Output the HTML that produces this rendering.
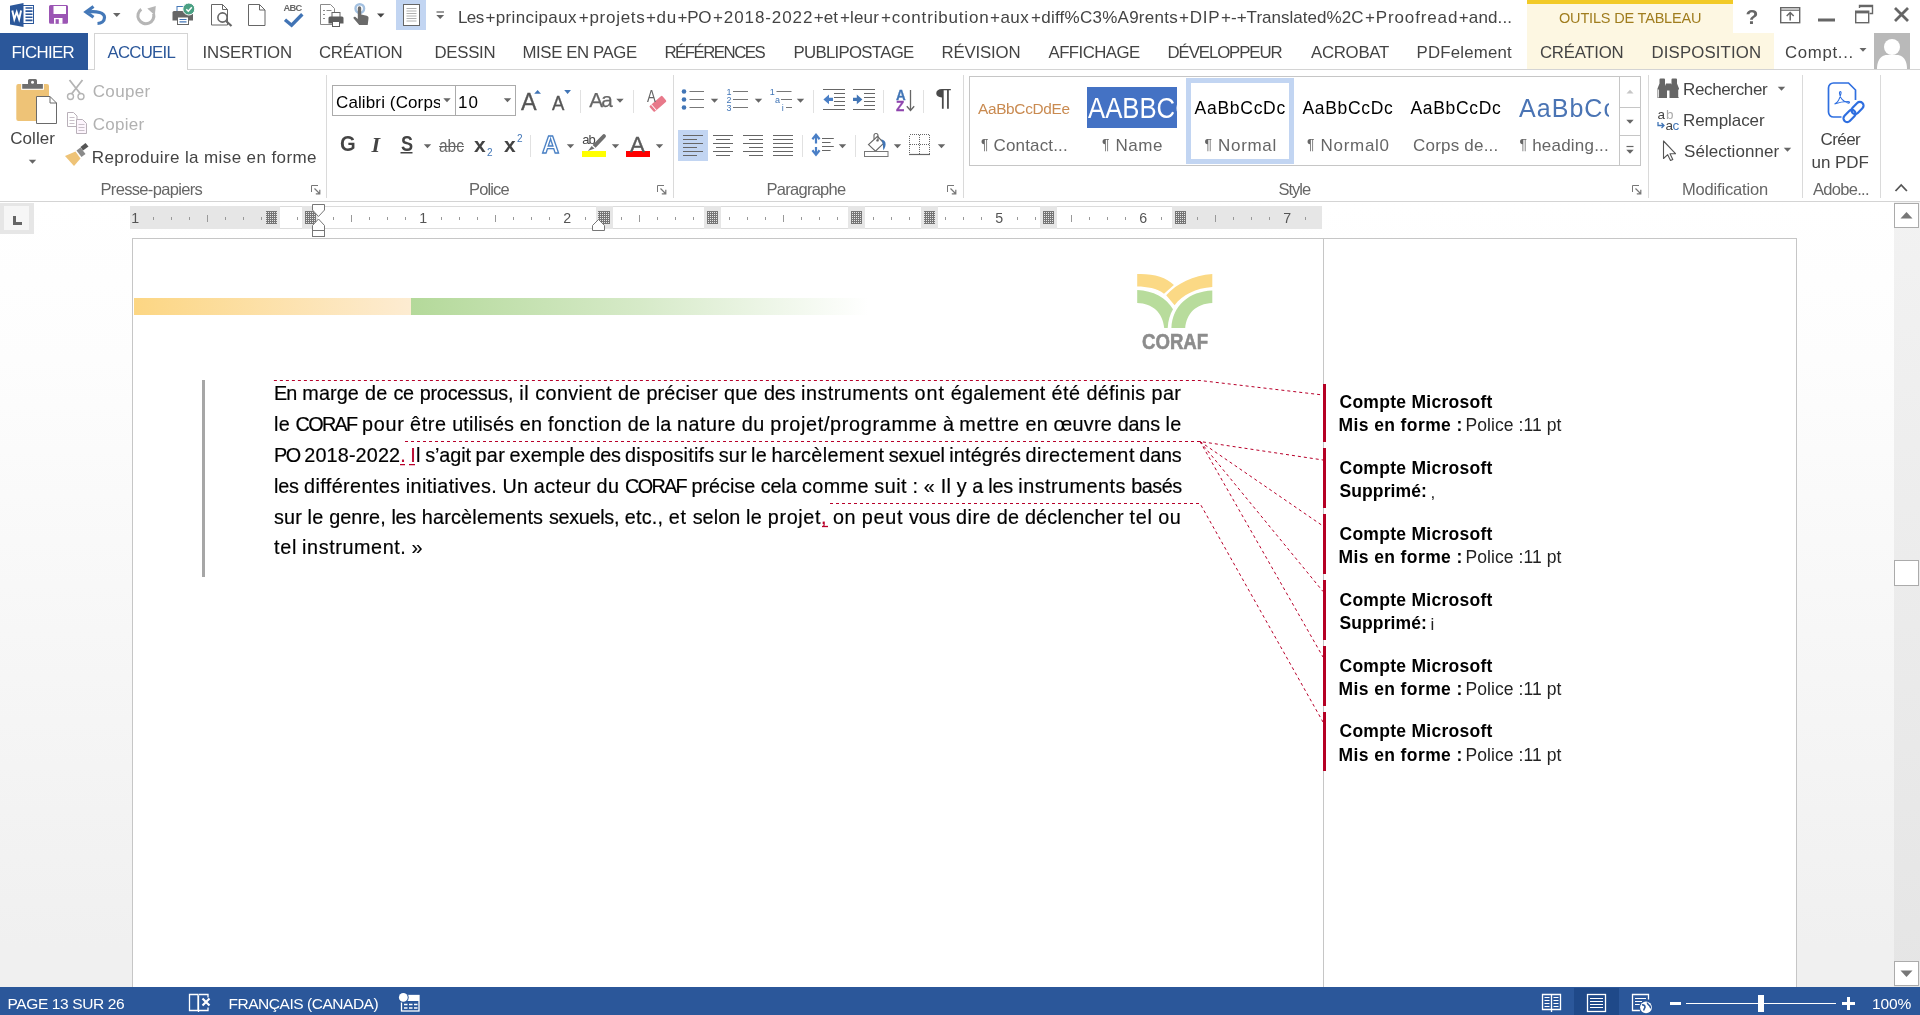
<!DOCTYPE html>
<html lang="fr"><head><meta charset="utf-8"><title>Word</title>
<style>
html,body{margin:0;padding:0}
body{width:1920px;height:1015px;overflow:hidden;background:#fff;position:relative;font-family:"Liberation Sans",sans-serif;color:#444}
.t{position:absolute;white-space:pre;transform-origin:0 0;display:block}
.a{position:absolute;box-sizing:border-box}
svg.ov{position:absolute;left:0;top:0;overflow:visible}
.sep{position:absolute;width:1px;background:#e1e1e1}
.gsep{position:absolute;width:1px;background:#dadada;top:75px;height:123px}
.r{color:#b8002a}
#txt{position:absolute;left:0;top:0;width:1920px;height:1015px;will-change:transform}
.doc{-webkit-text-stroke-width:0.2px}

</style></head>
<body>
<!-- ===== title bar ===== -->
<div class="a" id="titlebar" style="left:0;top:0;width:1920px;height:33px;background:#fff"></div>
<div class="a" style="left:396px;top:0;width:30px;height:30px;background:#c2d5f2"></div>
<div class="a" id="ctxhead" style="left:1527px;top:0;width:206px;height:33px;background:#fdf7e2;border-top:4px solid #f2ca27"></div>
<div class="a" id="ctxtabs" style="left:1527px;top:33px;width:247px;height:36px;background:#fdf7e2"></div>
<!-- ===== tab row ===== -->
<div class="a" style="left:0;top:69px;width:1920px;height:1px;background:#d4d4d4"></div>
<div class="a" id="fichier" style="left:0;top:33px;width:88px;height:37px;background:#2b579a"></div>
<div class="a" id="tabsel" style="left:94px;top:33px;width:94px;height:37px;background:#fff;border:1px solid #d4d4d4;border-bottom:none"></div>
<div class="a" id="avatar" style="left:1874px;top:33px;width:36px;height:36px;background:#b9b9b9;overflow:hidden">
 <svg width="36" height="36" viewBox="0 0 36 36"><circle cx="18" cy="14" r="8" fill="#fff"/><path d="M3 36 C3 24 10 22 13 22 L23 22 C26 22 33 24 33 36Z" fill="#fff"/></svg>
</div>
<svg class="ov" width="1920" height="72" viewBox="0 0 1920 72">
 <!-- word icon -->
 <path d="M10 5.800 L23.500 3 V27 L10 24.400Z" fill="#2b579a"/>
 <rect x="23" y="5.500" width="10.500" height="18" fill="#fff" stroke="#2b579a" stroke-width="1"/>
 <path d="M25.500 8h7M25.500 11.100h7M25.500 14.200h7M25.500 17.300h7M25.500 20.400h7" stroke="#2b579a" stroke-width="1.600"/>
 <path d="M12.300 10.500 L14.300 19.300 L16.700 12 L19.100 19.300 L21.100 10.500" fill="none" stroke="#fff" stroke-width="1.900"/>
 <!-- save -->
 <path d="M50.500 5h16a1.500 1.500 0 0 1 1.500 1.500v15.800a1.500 1.500 0 0 1-1.500 1.500h-16a1.500 1.500 0 0 1-1.500-1.500v-15.800a1.500 1.500 0 0 1 1.500-1.500z" fill="#9b55b4"/>
 <rect x="53.500" y="6" width="12.500" height="8" fill="#fff"/>
 <rect x="54" y="18" width="8.500" height="5.800" fill="#fff"/>
 <rect x="55.600" y="19.200" width="3.200" height="4.600" fill="#9b55b4"/>
 <!-- undo -->
 <path d="M93.500 6.500 L86 12 L93.500 17.200 M87.500 12 C97 11 104.500 12.500 104.500 17.500 C104.500 21.500 101 23.300 97.500 23.500" fill="none" stroke="#4478b8" stroke-width="3.200" stroke-linejoin="miter"/>
 <path d="M113 13h7.500l-3.750 4z" fill="#666"/>
 <!-- redo (disabled) -->
 <path d="M141.300 9.200 A8 8 0 1 0 153.600 13.600" fill="none" stroke="#b6b6b6" stroke-width="3"/>
 <path d="M147.300 8.600 L155.800 6 L154.800 15.200z" fill="#b6b6b6"/>
 <!-- printer with check -->
 <rect x="177" y="6.500" width="9" height="6" fill="#fff" stroke="#4478b8" stroke-width="1"/>
 <path d="M174 11h17.500a1.500 1.500 0 0 1 1.500 1.500v8h-20.500v-8a1.500 1.500 0 0 1 1.500-1.500z" fill="#666"/>
 <rect x="177.500" y="17" width="11" height="7.500" fill="#fff" stroke="#666" stroke-width="1"/>
 <path d="M179.500 19.500h7M179.500 21.800h7" stroke="#4175b6" stroke-width="1.200"/>
 <circle cx="188.800" cy="9" r="6" fill="#4aa083" stroke="#fff" stroke-width="1"/>
 <path d="M186.3 9.2l2 2 3.5-4" fill="none" stroke="#fff" stroke-width="1.5"/>
 <!-- preview -->
 <path d="M211.5 4.5h11l5 5v15.5h-16z" fill="#fff" stroke="#666" stroke-width="1"/>
 <path d="M222.5 4.5v5h5" fill="none" stroke="#666" stroke-width="1"/>
 <circle cx="222.5" cy="17.5" r="4.6" fill="#fff" stroke="#666" stroke-width="1.6"/>
 <path d="M226 21l5.5 5" stroke="#666" stroke-width="2.2"/>
 <!-- new page -->
 <path d="M248.5 4.5h11l5.5 5.5v15.5h-16.5z" fill="#fff" stroke="#666" stroke-width="1"/>
 <path d="M259.5 4.5v5.5h5.5" fill="none" stroke="#666" stroke-width="1"/>
 <!-- ABC check -->
 <path d="M285 19.800L291.600 25.300L302.300 14.300" fill="none" stroke="#4174b5" stroke-width="3.400"/>
 <!-- quick print -->
 <path d="M320.5 4.5h10l4 4v16h-14z" fill="#fff" stroke="#8a8a8a" stroke-width="1"/>
 <path d="M323 10.5h2M323 14.5h2M323 18.5h2M326.5 10.5h5" stroke="#8a8a8a" stroke-width="1"/>
 <rect x="332" y="12.5" width="8" height="5" fill="#fff" stroke="#666" stroke-width="1"/>
 <path d="M330 16.5h12a1.5 1.5 0 0 1 1.5 1.5v5.5h-15v-5.5a1.5 1.5 0 0 1 1.5-1.5z" fill="#5e5e5e"/>
 <rect x="332.5" y="21.5" width="7" height="5" fill="#fff" stroke="#5e5e5e" stroke-width="1"/>
 <!-- touch -->
 <circle cx="359.800" cy="8.500" r="4.300" fill="none" stroke="#a3c0e0" stroke-width="2.400"/>
 <path d="M357.8 8 a1.7 1.7 0 0 1 3.4 0 v6.5 l5.5 1.2 c1.5 .4 2 1.3 1.8 2.8 l-.8 6.5 h-8.5 l-5.5-6.5 c-.8-1.2 .6-2.4 1.8-1.5 l2.3 1.9z" fill="#6a6a6a"/>
 <path d="M377 13.5h7.5l-3.75 4z" fill="#444"/>
 <!-- page (selected) -->
 <rect x="403.500" y="4.500" width="16" height="21" fill="#fff" stroke="#666" stroke-width="1"/>
 <path d="M406.500 8.500h10M406.500 11h10M406.500 13.500h10M406.500 16h10M406.500 18.500h10M406.500 21h10" stroke="#b0b0b0" stroke-width="1"/>
 <!-- customize -->
 <path d="M436.5 12h7.5" stroke="#666" stroke-width="1.3"/>
 <path d="M436.3 15h7.8l-3.9 4z" fill="#666"/>
 <!-- window controls -->
 <rect x="1780.700" y="7.700" width="19" height="15" fill="none" stroke="#666" stroke-width="1.400"/>
 <path d="M1780.700 10.200h19" stroke="#666" stroke-width="1.200"/>
 <path d="M1790.200 20.500v-7.500M1786.700 16l3.500-3.500 3.500 3.500" fill="none" stroke="#666" stroke-width="1.500"/>
 <rect x="1818" y="18.5" width="17" height="3" fill="#666"/>
 <path d="M1859.5 8v-2.5h13v8h-3" fill="none" stroke="#666" stroke-width="1.4"/>
 <path d="M1859.5 6.2h13" stroke="#666" stroke-width="2"/>
 <rect x="1855.7" y="11.2" width="13" height="11.5" fill="#fff" stroke="#666" stroke-width="1.4"/>
 <path d="M1855.7 12.2h13" stroke="#666" stroke-width="2.4"/>
 <path d="M1895 8l13 13M1908 8l-13 13" stroke="#666" stroke-width="2.8"/>
 <!-- account arrow -->
 <path d="M1859.5 48h7l-3.5 3.8z" fill="#666"/>
</svg>
<!-- ===== ribbon ===== -->
<div class="a" id="ribbon" style="left:0;top:70px;width:1920px;height:131px;background:#fff"></div>
<div class="a" style="left:0;top:201px;width:1920px;height:1px;background:#d4d4d4"></div>
<div class="gsep" style="left:326px"></div>
<div class="gsep" style="left:673px"></div>
<div class="gsep" style="left:963px"></div>
<div class="gsep" style="left:1648px"></div>
<div class="gsep" style="left:1802px"></div>
<div class="gsep" style="left:1880px"></div>
<!-- font boxes -->
<div class="a" style="left:332px;top:85px;width:124px;height:31px;border:1px solid #ababab;background:#fff"></div>
<div class="a" style="left:455px;top:85px;width:61px;height:31px;border:1px solid #ababab;background:#fff"></div>
<!-- small separators -->
<div class="sep" style="left:580px;top:90px;height:23px"></div>
<div class="sep" style="left:633px;top:90px;height:23px"></div>
<div class="sep" style="left:530px;top:135px;height:22px"></div>
<div class="sep" style="left:813px;top:90px;height:23px"></div>
<div class="sep" style="left:883px;top:90px;height:23px"></div>
<div class="sep" style="left:923px;top:90px;height:23px"></div>
<div class="sep" style="left:802px;top:135px;height:22px"></div>
<div class="sep" style="left:855px;top:135px;height:22px"></div>
<!-- selected align-left -->
<div class="a" style="left:678px;top:130px;width:30px;height:31px;background:#c2d5f2"></div>
<!-- highlight + font colour bars -->
<div class="a" style="left:582px;top:151px;width:24px;height:6px;background:#ffff00"></div>
<div class="a" style="left:626px;top:151px;width:24px;height:6px;background:#ff0000"></div>
<!-- style gallery -->
<div class="a" id="gallery" style="left:969px;top:76px;width:672px;height:90px;border:1px solid #c6c6c6;background:#fff"></div>
<div class="a" style="left:1619px;top:76px;width:1px;height:90px;background:#c6c6c6"></div>
<div class="a" style="left:1619px;top:107px;width:22px;height:1px;background:#c6c6c6"></div>
<div class="a" style="left:1619px;top:135px;width:22px;height:1px;background:#c6c6c6"></div>
<div class="a" style="left:1087px;top:87px;width:90px;height:41px;background:#4472c4"></div>
<div class="a" style="left:1186px;top:78px;width:108px;height:86px;border:5px solid #c2d5f2;background:#fff"></div>
<svg class="ov" width="1920" height="202" viewBox="0 0 1920 202">
 <defs>
  <path id="dd" d="M-0.200 0.200h7.400l-3.700 4.100z" fill="#666"/>
  <g id="launch"><path d="M0.5 7v-6.5h6.5" fill="none" stroke="#777" stroke-width="1"/><path d="M3.5 3.5l5 5M8.8 4.8v4h-4" fill="none" stroke="#777" stroke-width="1.2"/></g>
 </defs>
 <!-- paste -->
 <path d="M18.300 84h28.700a2 2 0 0 1 2 2v33a2 2 0 0 1-2 2h-28.700a2 2 0 0 1-2-2v-33a2 2 0 0 1 2-2z" fill="#eec377"/>
 <rect x="21.200" y="83" width="22.700" height="6.800" fill="#fff"/>
 <path d="M22.200 84h5.800v-3.500a1.500 1.500 0 0 1 1.500-1.500h6a1.500 1.500 0 0 1 1.500 1.500v3.500h5.900v4.800h-20.700z" fill="#6e6e6e"/>
 <circle cx="32.500" cy="82.300" r="1.500" fill="#fff"/>
 <path d="M36.5 96.5h13.5l6.5 6.5v20.5h-20z" fill="#fff" stroke="#6a6a6a" stroke-width="1"/>
 <path d="M50 96.5v6.5h6.5" fill="none" stroke="#6a6a6a" stroke-width="1"/>
 <use href="#dd" x="29" y="159.5"/>
 <!-- scissors (disabled) -->
 <path d="M69.5 80l11 14M82.5 80l-11 14" stroke="#b4b4b4" stroke-width="1.8"/>
 <circle cx="70.5" cy="96.5" r="3" fill="none" stroke="#b4b4b4" stroke-width="1.4"/>
 <circle cx="81" cy="96.5" r="3" fill="none" stroke="#b4b4b4" stroke-width="1.4"/>
 <!-- copy (disabled) -->
 <path d="M67.5 112.5h6l3.5 3.5v10.5h-9.5z" fill="#fff" stroke="#b9b0b9" stroke-width="1"/>
 <path d="M69.5 117.5h5M69.5 120.5h5M69.5 123.5h5" stroke="#c9c0c9" stroke-width="1"/>
 <path d="M76.5 119.5h6l4 4v10h-10z" fill="#fdf5fd" stroke="#b9b0b9" stroke-width="1"/>
 <path d="M78.5 124.5h6M78.5 127.5h6M78.5 130.5h6" stroke="#c9c0c9" stroke-width="1"/>
 <!-- format painter -->
 <path d="M65 156l10.5-4.5 5 7-6.5 7.5z" fill="#eec377"/>
 <path d="M76.5 150.5l4-3 5 6.5-4 3z" fill="#8a8a8a"/>
 <path d="M80.500 147l5-4 3 3.500-5.500 4z" fill="#555"/>
 <!-- font boxes arrows -->
 <use href="#dd" x="443.500" y="98"/>
 <use href="#dd" x="504" y="98"/>
 <path d="M534.200 93.800l3.400-3.900 3.400 3.900z" fill="#4175b6"/>
 <path d="M564.200 90h6.800l-3.400 3.900z" fill="#4175b6"/>
 <use href="#dd" x="616.500" y="98.500"/>
 <!-- clear formatting eraser -->
 <g transform="translate(657.900 103.800) rotate(-41)"><rect x="-8.400" y="-3.800" width="16.800" height="7.600" rx="1.200" fill="#e8798a"/><rect x="-6" y="-3.800" width="1" height="7.600" fill="#fff"/></g>
 <!-- row2 arrows -->
 <use href="#dd" x="424" y="144"/>
 <use href="#dd" x="567" y="144"/>
 <use href="#dd" x="612" y="144"/>
 <use href="#dd" x="656" y="144"/>
 <!-- highlighter pen -->
 <path d="M602.600 134.800a1.900 1.900 0 0 1 2.800 2.600l-9.800 10.400-3-2.800z" fill="#6e6e6e"/><path d="M591.700 146l2.800 2.600-6.600 2.500z" fill="#6e6e6e"/>
 <!-- S underline -->
 <rect x="400.500" y="152" width="12" height="1.500" fill="#444"/>
 <!-- bullets -->
 <g fill="#4175b6"><circle cx="684" cy="91.500" r="2.300"/><circle cx="684" cy="99.500" r="2.300"/><circle cx="684" cy="107.500" r="2.300"/></g>
 <path d="M689.500 91.500h14.500M689.500 99.500h14.500M689.500 107.500h14.500" stroke="#777" stroke-width="1.200"/>
 <use href="#dd" x="711" y="98.500"/>
 <!-- numbering -->
 <path d="M733 91.500h15M733 99.500h15M733 107.500h15" stroke="#777" stroke-width="1.200"/>
 <use href="#dd" x="755" y="98.500"/>
 <!-- multilevel -->
 <path d="M776.500 91.500h15M781 99.500h11M786 107.500h6" stroke="#777" stroke-width="1.200"/>
 <use href="#dd" x="797" y="98.500"/>
 <!-- decrease indent -->
 <path d="M823 89.500h22M834 93.500h11M834 97.500h11M834 101.500h11M834 105.500h11M823 109.500h22" stroke="#666" stroke-width="1"/>
 <path d="M823.400 99.400L829 94.600V97.800H833V101H829V104.200Z" fill="#4a7fc6"/>
 <!-- increase indent -->
 <path d="M853 89.500h22M864 93.500h11M864 97.500h11M864 101.500h11M864 105.500h11M853 109.500h22" stroke="#666" stroke-width="1"/>
 <path d="M862.400 99.400L856.800 94.600V97.800H853V101H856.800V104.200Z" fill="#4175b6"/>
 <!-- sort arrow -->
 <path d="M910.500 90v20M906.800 106.300l3.700 4.200 3.700-4.200" fill="none" stroke="#666" stroke-width="1.300"/>
 <!-- align icons -->
 <path d="M683 135.500h20M683 139.500h14M683 143.500h20M683 147.500h14M683 151.500h20M683 155.500h14" stroke="#666" stroke-width="1.100"/>
 <path d="M713 135.500h20M716 139.500h14M713 143.500h20M716 147.500h14M713 151.500h20M716 155.500h14" stroke="#666" stroke-width="1.100"/>
 <path d="M743 135.500h20M749 139.500h14M743 143.500h20M749 147.500h14M743 151.500h20M749 155.500h14" stroke="#666" stroke-width="1.100"/>
 <path d="M773 135.500h20M773 139.500h20M773 143.500h20M773 147.500h20M773 151.500h20M773 155.500h20" stroke="#666" stroke-width="1.100"/>
 <!-- line spacing -->
 <path d="M816 135.500v8M816 147v7" fill="none" stroke="#4a7fc6" stroke-width="2.200"/>
 <path d="M812.400 139.300l3.600-4.600 3.600 4.600M812.400 150.200l3.600 4.600 3.600-4.600" fill="none" stroke="#4a7fc6" stroke-width="2.200"/>
 <path d="M822 138.500h11.800M822 142.500h8.600M822 146.500h11.800M822 150.500h8.600" stroke="#666" stroke-width="1"/>
 <use href="#dd" x="839" y="144"/>
 <!-- shading bucket -->
 <path d="M868.500 144.600l9-8.300 6.300 6.800-8.300 8z" fill="#fff" stroke="#666" stroke-width="1.200"/>
 <path d="M874 139.500v-4a2 2 0 0 1 4 0v4.500" fill="none" stroke="#666" stroke-width="1.100"/>
 <circle cx="877.500" cy="140.400" r="1.200" fill="#666"/>
 <path d="M881.200 139.200c2.800 .6 4.600 2.600 4.400 5.200-.2 2.400-1 4-2.200 5.800-.6-3.600-.4-5.600-.9-7.400z" fill="#4175b6"/>
 <rect x="864.500" y="151.500" width="23.500" height="5" fill="#fff" stroke="#777" stroke-width="1"/>
 <use href="#dd" x="894" y="144"/>
 <!-- borders -->
 <rect x="909.500" y="134.500" width="20" height="20" fill="none" stroke="#666" stroke-width="1" stroke-dasharray="1 1" shape-rendering="crispEdges"/>
 <path d="M919.500 134.500v20M909.500 144.500h20" stroke="#666" stroke-width="1" stroke-dasharray="1 1" shape-rendering="crispEdges"/>
 <path d="M909 154.500h21" stroke="#666" stroke-width="1.200"/>
 <use href="#dd" x="938" y="144"/>
 <!-- launchers -->
 <use href="#launch" x="311" y="185"/>
 <use href="#launch" x="657" y="185"/>
 <use href="#launch" x="947" y="185"/>
 <use href="#launch" x="1632" y="185"/>
 <!-- gallery scroll arrows -->
 <path d="M1626.500 93.500h7l-3.500-3.800z" fill="#c6c6c6"/>
 <use href="#dd" x="1626.500" y="119.500"/>
 <path d="M1626.500 146.500h7" stroke="#666" stroke-width="1.200"/>
 <use href="#dd" x="1626.500" y="149.500"/>
 <!-- binoculars -->
 <path d="M1657.500 98v-9.500l2-5v-4a1 1 0 0 1 1-1h3.500a1 1 0 0 1 1 1v4l2 5v9.500zM1669.500 98v-9.500l2-5v-4a1 1 0 0 1 1-1h3.500a1 1 0 0 1 1 1v4l2 5v9.500z" fill="#666"/>
 <rect x="1666" y="83.500" width="5" height="7" fill="#666"/>
 <path d="M1658.500 97.500v-8M1678.500 97.500v-8" stroke="#ddd" stroke-width="1"/>
 <use href="#dd" x="1778" y="86.500"/>
 <!-- replace arrow -->
 <path d="M1658 122v3.500h5.500M1661.500 123l2.500 2.500-2.500 2.500" fill="none" stroke="#4175b6" stroke-width="1.300"/>
 <!-- select cursor -->
 <path d="M1663.500 141v17.500l4.200-3.800 2.800 5.800 2.300-1.100-2.800-5.700h5.500z" fill="#fff" stroke="#555" stroke-width="1.100" stroke-linejoin="round"/>
 <use href="#dd" x="1784" y="147.500"/>
 <!-- create PDF -->
 <path d="M1828.500 88a5 5 0 0 1 5-5h15l7 7v10" fill="none" stroke="#2f6fe0" stroke-width="1.700"/>
 <path d="M1828.500 88v24a5 5 0 0 0 5 5h8" fill="none" stroke="#2f6fe0" stroke-width="1.700"/>
 <path d="M1834.500 104c3-1 5.500-6 6.500-10.500 .5-2.500-1.800-2.500-1.500 0 .6 4.500 4 8 8.500 9.500 2 .5 2-1.500 0-1.500-4.500 0-10 1.200-13.500 2.500z" fill="none" stroke="#2f6fe0" stroke-width="1.100"/>
 <g fill="none" stroke="#2f6fe0" stroke-width="2.200"><rect x="-7" y="-3.700" width="14" height="7.400" rx="3.700" transform="translate(1849.500 116) rotate(-45)"/><rect x="-7" y="-3.700" width="14" height="7.400" rx="3.700" transform="translate(1857.500 108) rotate(-45)"/></g>
 <!-- collapse ribbon -->
 <path d="M1895.500 191l5.700-6 5.700 6" fill="none" stroke="#555" stroke-width="1.800"/>
</svg>
<!-- ===== document area ===== -->
<div class="a" id="docarea" style="left:0;top:202px;width:1920px;height:785px;background:linear-gradient(#ffffff,#fdfdfd 20%,#f0f0f0 95%)"></div>
<!-- tab selector -->
<div class="a" style="left:0;top:203px;width:34px;height:31px;background:#e6e6e6"></div>
<div class="a" style="left:4px;top:206px;width:25px;height:24px;background:#f6f6f6"></div>
<div class="a" style="left:13px;top:216px;width:3px;height:9px;background:#666"></div>
<div class="a" style="left:13px;top:222px;width:9px;height:3px;background:#666"></div>
<!-- ruler -->
<div class="a" id="ruler" style="left:130px;top:206px;width:1192px;height:23px;background:#fff;border-top:1px solid #dcdcdc;border-bottom:1px solid #dcdcdc"></div>
<div class="a" style="left:130px;top:206px;width:150px;height:23px;background:#e6e6e6"></div>
<div class="a" style="left:302px;top:206px;width:16px;height:23px;background:#e6e6e6"></div>
<div class="a" style="left:596px;top:206px;width:17px;height:23px;background:#e6e6e6"></div>
<div class="a" style="left:704px;top:206px;width:17px;height:23px;background:#e6e6e6"></div>
<div class="a" style="left:848px;top:206px;width:17px;height:23px;background:#e6e6e6"></div>
<div class="a" style="left:921px;top:206px;width:17px;height:23px;background:#e6e6e6"></div>
<div class="a" style="left:1040px;top:206px;width:17px;height:23px;background:#e6e6e6"></div>
<div class="a" style="left:1172px;top:206px;width:150px;height:23px;background:#e6e6e6"></div>
<!-- page -->
<div class="a" id="page" style="left:132px;top:238px;width:1665px;height:750px;background:#fff;border:1px solid #c6c6c6;border-bottom:none"></div>
<div class="a" style="left:1323px;top:239px;width:1px;height:748px;background:#c6c6c6"></div>
<!-- header gradient bars -->
<div class="a" style="left:134px;top:298px;width:277px;height:17px;background:linear-gradient(90deg,#fcd683,#fdecd2)"></div>
<div class="a" style="left:411px;top:298px;width:457px;height:17px;background:linear-gradient(90deg,#b4d99a,#d6eac8 50%,#ffffff)"></div>
<!-- change bar -->
<div class="a" style="left:202px;top:380px;width:3px;height:197px;background:#a6a6a6"></div>
<!-- balloon bars -->
<div class="a" style="left:1323px;top:384px;width:3px;height:58px;background:#b50024"></div>
<div class="a" style="left:1323px;top:448px;width:3px;height:60px;background:#b50024"></div>
<div class="a" style="left:1323px;top:514px;width:3px;height:60px;background:#b50024"></div>
<div class="a" style="left:1323px;top:580px;width:3px;height:60px;background:#b50024"></div>
<div class="a" style="left:1323px;top:646px;width:3px;height:60px;background:#b50024"></div>
<div class="a" style="left:1323px;top:712px;width:3px;height:59px;background:#b50024"></div>
<!-- scrollbar -->
<div class="a" style="left:1894px;top:202px;width:26px;height:785px;background:linear-gradient(#f2f2f2,#e5e5e5)"></div>
<div class="a" style="left:1894px;top:203px;width:25px;height:25px;background:#fff;border:1px solid #ababab"></div>
<div class="a" style="left:1894px;top:560px;width:25px;height:26px;background:#fff;border:1px solid #ababab"></div>
<div class="a" style="left:1894px;top:961px;width:25px;height:25px;background:#fff;border:1px solid #ababab"></div>
<svg class="ov" width="1920" height="1015" viewBox="0 0 1920 1015">
 <defs>
  <pattern id="hatch" width="2" height="2" patternUnits="userSpaceOnUse"><rect width="2" height="2" fill="#757575"/><rect x="0" y="0" width="1" height="1" fill="#e6e6e6"/></pattern>
 </defs>
 <!-- scroll arrows -->
 <path d="M1900.500 218.500h12l-6-6.500z" fill="#777"/>
 <path d="M1900.500 970.500h12l-6 6.500z" fill="#777"/>
 <!-- ruler ticks -->
 <g stroke="#999" stroke-width="1">
  <path d="M153.500 217v3M171.500 217v3M189.500 217v3M207.500 215v7M225.500 217v3M243.500 217v3M261.500 217v3"/>
  <path d="M297.500 217v3M333.500 217v3M351.500 215v7M369.500 217v3M387.500 217v3M405.500 217v3"/>
  <path d="M441.500 217v3M459.500 217v3M477.500 217v3M495.500 215v7M513.500 217v3M531.500 217v3M549.500 217v3M585.500 217v3"/>
  <path d="M621.500 217v3M639.500 215v7M657.500 217v3M675.500 217v3M693.500 217v3"/>
  <path d="M729.500 217v3M747.500 217v3M765.500 217v3M783.500 215v7M801.500 217v3M819.500 217v3M837.500 217v3"/>
  <path d="M873.500 217v3M891.500 217v3M909.500 217v3"/>
  <path d="M945.500 217v3M963.500 217v3M981.500 217v3M1017.500 217v3M1035.500 217v3"/>
  <path d="M1071.500 215v7M1089.500 217v3M1107.500 217v3M1125.500 217v3M1161.500 217v3"/>
  <path d="M1197.500 217v3M1215.500 215v7M1233.500 217v3M1251.500 217v3M1269.500 217v3M1305.500 217v3"/>
 </g>
 <!-- hatch markers -->
 <g fill="url(#hatch)">
  <rect x="266" y="211" width="11" height="13"/><rect x="305" y="211" width="11" height="13"/>
  <rect x="598" y="211" width="12" height="13"/><rect x="707" y="211" width="11" height="13"/>
  <rect x="851" y="211" width="11" height="13"/><rect x="924" y="211" width="11" height="13"/>
  <rect x="1043" y="211" width="11" height="13"/><rect x="1175" y="211" width="11" height="13"/>
 </g>
 <!-- indent markers -->
 <path d="M312.500 204.500h12v5.500l-6 6.500-6-6.500z" fill="#fff" stroke="#777" stroke-width="1"/>
 <path d="M312.500 230.500v-5l6-6.500 6 6.500v5z" fill="#fff" stroke="#777" stroke-width="1"/>
 <rect x="312.500" y="230.500" width="12" height="6" fill="#fff" stroke="#777" stroke-width="1"/>
 <path d="M592.500 230.500v-5l6-6 6 6v5z" fill="#fff" stroke="#777" stroke-width="1"/>
 <!-- CORAF logo -->
 <g transform="translate(1115 260)">
  <path d="M22.200 14.100 C38 13.500 51 17 58.900 25.100 L49 33.800 C42 28.500 32 26.600 22.200 26.600Z" fill="#fbd985"/>
  <path d="M51.200 35.300 C62 23.500 78 15.500 97.300 14.100 V27 C81 28 67 35 59.600 45.300Z" fill="#fbd985"/>
  <path d="M22.200 30 C38 30.500 51.500 38 58 49.300 C55 54.500 53.200 60.500 52.700 68 H49.200 C48 53 38 43.300 22.200 42.900Z" fill="#b8dc9c"/>
  <path d="M97.300 30.500 C74 31.500 57.500 45.500 56.400 68 H70.200 C71.500 53.500 81 43.500 97.300 42.900Z" fill="#b8dc9c"/>
 </g>
 <!-- tracked change connectors -->
 <g fill="none" stroke="#b8002a" stroke-width="1" stroke-dasharray="3 3">
  <path d="M273.900 380.500H1200L1323 395"/>
  <path d="M405 441.500H1200L1323 460"/>
  <path d="M1200 441.500L1323 526"/>
  <path d="M1200 441.500L1323 591.500"/>
  <path d="M1200 441.500L1323 657"/>
  <path d="M830 503.500H1200L1323 722"/>
 </g>
 <!-- inserted text underline -->
 <path d="M400 464.600h5M409 464.600h6" stroke="#b8002a" stroke-width="1.300"/>
 <path d="M822 526.500h6" stroke="#b8002a" stroke-width="1.300"/>
</svg>
<!-- ===== status bar ===== -->
<div class="a" id="statusbar" style="left:0;top:987px;width:1920px;height:28px;background:#2b579a"></div>
<div class="a" style="left:1574px;top:988px;width:45px;height:27px;background:#1f4989"></div>
<svg class="ov" width="1920" height="1015" viewBox="0 0 1920 1015">
 <g fill="none" stroke="#fff" stroke-width="1.300">
  <!-- book with x -->
  <path d="M189.500 994.500H198V1010.500H189.500ZM198.500 995.500V1012M199 994.500H208V997.500M208 1007.500V1010.500H199"/>
  <path d="M202.500 998.500l7 7M209.500 998.500l-7 7" stroke-width="2.200"/>
  <!-- macro -->
  <rect x="401.500" y="995.500" width="17.500" height="15.500"/>
  <path d="M404 1004.500h3.500M409 1004.500h3.500M414 1004.500h3.500M404 1008h3.500M409 1008h3.500M414 1008h3.500" stroke-width="1.500"/>
  <!-- read mode -->
  <path d="M1542.500 994.500H1560.500V1009.500H1542.500ZM1551.500 994.500V1012"/>
  <path d="M1544.500 997.500h5M1544.500 1000.500h5M1544.500 1003.500h5M1544.500 1006.500h5M1553.500 997.500h5M1553.500 1000.500h5M1553.500 1003.500h5M1553.500 1006.500h5" stroke-width="1"/>
  <!-- print layout -->
  <rect x="1587.500" y="994.500" width="18" height="17"/>
  <path d="M1590 998.500h13M1590 1001.500h13M1590 1004.500h13M1590 1007.500h13" stroke-width="1"/>
  <!-- web layout -->
  <path d="M1640 1010.500h-7.500v-16h16v5"/>
  <path d="M1635 998.500h11M1635 1001.500h7M1635 1004.500h5" stroke-width="1"/>
 </g>
 <rect x="401.500" y="995.500" width="17.500" height="5.500" fill="#fff"/><circle cx="403.300" cy="997.400" r="5.400" fill="#2b579a"/><circle cx="403.300" cy="997.400" r="4.400" fill="#fff"/>
 <circle cx="1646" cy="1007.300" r="6.900" fill="#2b579a"/><circle cx="1646" cy="1007.300" r="5.900" fill="#fff"/>
 <path d="M1642 1005c1.500-.5 3 .5 3 2s-1.500 1.500-1 3.500M1647.500 1002.500c-.5 1.500 1 2 2 3s.5 2 1.500 2.500" fill="none" stroke="#2b579a" stroke-width="1.600"/>
 <!-- zoom -->
 <rect x="1670" y="1002" width="11" height="3" fill="#fff"/>
 <rect x="1686" y="1003" width="150" height="1" fill="#fff"/>
 <rect x="1758" y="995" width="6" height="17" fill="#fff"/>
 <path d="M1842 1003.500h13M1848.500 997v13" stroke="#fff" stroke-width="3"/>
</svg>

<div id="txt">
<span class="t" style="left:458.0px;top:9.4px;font-size:17px;line-height:17px;color:#444;letter-spacing:-0.611px;">Les</span>
<span class="t" style="left:485.5px;top:9.4px;font-size:17px;line-height:17px;color:#444;letter-spacing:0.353px;">+principaux</span>
<span class="t" style="left:578.8px;top:9.4px;font-size:17px;line-height:17px;color:#444;letter-spacing:0.714px;">+projets</span>
<span class="t" style="left:646.0px;top:9.4px;font-size:17px;line-height:17px;color:#444;letter-spacing:0.655px;">+du</span>
<span class="t" style="left:677.5px;top:9.4px;font-size:17px;line-height:17px;color:#444;letter-spacing:-0.288px;">+PO</span>
<span class="t" style="left:713.0px;top:9.4px;font-size:17px;line-height:17px;color:#444;letter-spacing:0.908px;">+2018-2022</span>
<span class="t" style="left:813.8px;top:9.4px;font-size:17px;line-height:17px;color:#444;letter-spacing:0.032px;">+et</span>
<span class="t" style="left:840.0px;top:9.4px;font-size:17px;line-height:17px;color:#444;letter-spacing:0.145px;">+leur</span>
<span class="t" style="left:881.0px;top:9.4px;font-size:17px;line-height:17px;color:#444;letter-spacing:0.819px;">+contribution</span>
<span class="t" style="left:990.0px;top:9.4px;font-size:17px;line-height:17px;color:#444;letter-spacing:0.452px;">+aux</span>
<span class="t" style="left:1031.0px;top:9.4px;font-size:17px;line-height:17px;color:#444;letter-spacing:0.256px;">+diff%C3%A9rents</span>
<span class="t" style="left:1179.0px;top:9.4px;font-size:17px;line-height:17px;color:#444;letter-spacing:0.753px;">+DIP</span>
<span class="t" style="left:1221.0px;top:9.4px;font-size:17px;line-height:17px;color:#444;letter-spacing:0.028px;">+-+Translated%2C</span>
<span class="t" style="left:1365.0px;top:9.4px;font-size:17px;line-height:17px;color:#444;letter-spacing:0.868px;">+Proofread</span>
<span class="t" style="left:1458.8px;top:9.4px;font-size:17px;line-height:17px;color:#444;letter-spacing:0.117px;">+and...</span>
<span class="t" style="left:1559.0px;top:10.9px;font-size:14.5px;line-height:14.5px;color:#a07d1e;letter-spacing:-0.178px;">OUTILS DE TABLEAU</span>
<span class="t" style="left:1745.5px;top:6.0px;font-size:21px;line-height:21px;color:#666;font-weight:700;">?</span>
<span class="t" style="left:283.5px;top:3.9px;font-size:9.3px;line-height:9.3px;color:#666;font-weight:700;letter-spacing:-0.721px;">ABC</span>
<span class="t" style="left:11.5px;top:44.6px;font-size:16.8px;line-height:16.8px;color:#fff;letter-spacing:-0.668px;">FICHIER</span>
<span class="t" style="left:107.5px;top:44.6px;font-size:16.8px;line-height:16.8px;color:#2b579a;letter-spacing:-0.736px;">ACCUEIL</span>
<span class="t" style="left:202.5px;top:44.6px;font-size:16.8px;line-height:16.8px;color:#444;letter-spacing:-0.182px;">INSERTION</span>
<span class="t" style="left:319.0px;top:44.6px;font-size:16.8px;line-height:16.8px;color:#444;letter-spacing:-0.264px;">CRÉATION</span>
<span class="t" style="left:434.5px;top:44.6px;font-size:16.8px;line-height:16.8px;color:#444;letter-spacing:-0.273px;">DESSIN</span>
<span class="t" style="left:522.5px;top:44.6px;font-size:16.8px;line-height:16.8px;color:#444;letter-spacing:-0.397px;">MISE EN PAGE</span>
<span class="t" style="left:664.5px;top:44.6px;font-size:16.8px;line-height:16.8px;color:#444;letter-spacing:-1.501px;">RÉFÉRENCES</span>
<span class="t" style="left:793.5px;top:44.6px;font-size:16.8px;line-height:16.8px;color:#444;letter-spacing:-0.700px;">PUBLIPOSTAGE</span>
<span class="t" style="left:941.5px;top:44.6px;font-size:16.8px;line-height:16.8px;color:#444;letter-spacing:-0.155px;">RÉVISION</span>
<span class="t" style="left:1048.5px;top:44.6px;font-size:16.8px;line-height:16.8px;color:#444;letter-spacing:-0.544px;">AFFICHAGE</span>
<span class="t" style="left:1167.5px;top:44.6px;font-size:16.8px;line-height:16.8px;color:#444;letter-spacing:-1.079px;">DÉVELOPPEUR</span>
<span class="t" style="left:1311.0px;top:44.6px;font-size:16.8px;line-height:16.8px;color:#444;letter-spacing:-0.271px;">ACROBAT</span>
<span class="t" style="left:1416.5px;top:44.6px;font-size:16.8px;line-height:16.8px;color:#444;letter-spacing:0.211px;">PDFelement</span>
<span class="t" style="left:1540.0px;top:44.6px;font-size:16.8px;line-height:16.8px;color:#444;letter-spacing:-0.264px;">CRÉATION</span>
<span class="t" style="left:1651.5px;top:44.6px;font-size:16.8px;line-height:16.8px;color:#444;letter-spacing:0.145px;">DISPOSITION</span>
<span class="t" style="left:1785.0px;top:44.6px;font-size:16.8px;line-height:16.8px;color:#444;letter-spacing:0.677px;">Compt...</span>
<span class="t" style="left:10.3px;top:130.0px;font-size:17px;line-height:17px;color:#444;letter-spacing:0.031px;">Coller</span>
<span class="t" style="left:92.8px;top:83.0px;font-size:17px;line-height:17px;color:#b1b1b1;letter-spacing:0.299px;">Couper</span>
<span class="t" style="left:92.8px;top:116.0px;font-size:17px;line-height:17px;color:#b1b1b1;letter-spacing:0.233px;">Copier</span>
<span class="t" style="left:91.8px;top:149.0px;font-size:17px;line-height:17px;color:#444;letter-spacing:0.391px;">Reproduire la mise en forme</span>
<span class="t" style="left:100.5px;top:181.2px;font-size:16.5px;line-height:16.5px;color:#666;letter-spacing:-0.671px;">Presse-papiers</span>
<span class="t" style="left:469.0px;top:181.2px;font-size:16.5px;line-height:16.5px;color:#666;letter-spacing:-0.855px;">Police</span>
<span class="t" style="left:766.5px;top:181.2px;font-size:16.5px;line-height:16.5px;color:#666;letter-spacing:-0.729px;">Paragraphe</span>
<span class="t" style="left:1278.5px;top:181.2px;font-size:16.5px;line-height:16.5px;color:#666;letter-spacing:-1.003px;">Style</span>
<span class="t" style="left:1682.0px;top:181.2px;font-size:16.5px;line-height:16.5px;color:#666;letter-spacing:-0.170px;">Modification</span>
<span class="t" style="left:1813.0px;top:181.2px;font-size:16.5px;line-height:16.5px;color:#666;letter-spacing:-0.698px;">Adobe...</span>
<span class="t" style="left:336.0px;top:93.9px;font-size:17px;line-height:17px;color:#000;letter-spacing:0.121px;width:103.5px;overflow:hidden;">Calibri (Corps</span>
<span class="t" style="left:458.0px;top:93.9px;font-size:17px;line-height:17px;color:#000;letter-spacing:1.033px;">10</span>
<span class="t" style="left:521.0px;top:90.9px;font-size:23.5px;line-height:23.5px;color:#555;transform:scaleX(0.9992);-webkit-text-stroke:0.3px #555;">A</span>
<span class="t" style="left:552.0px;top:93.7px;font-size:19.3px;line-height:19.3px;color:#555;transform:scaleX(0.9605);-webkit-text-stroke:0.3px #555;">A</span>
<span class="t" style="left:589.2px;top:90.2px;font-size:20.7px;line-height:20.7px;color:#666;letter-spacing:-1.807px;-webkit-text-stroke:0.25px #666;">Aa</span>
<span class="t" style="left:646.5px;top:89.0px;font-size:16.8px;line-height:16.8px;color:#666;transform:scaleX(0.7910);">A</span>
<span class="t" style="left:339.5px;top:134.0px;font-size:21.5px;line-height:21.5px;color:#444;font-weight:700;transform:scaleX(0.9369);">G</span>
<span class="t" style="left:371.5px;top:133.6px;font-size:22px;line-height:22px;color:#444;font-weight:700;font-style:italic;font-family:'Liberation Serif',serif;">I</span>
<span class="t" style="left:401.0px;top:134.0px;font-size:21.5px;line-height:21.5px;color:#444;font-weight:700;transform:scaleX(0.8427);">S</span>
<span class="t" style="left:438.5px;top:137.0px;font-size:18px;line-height:18px;color:#666;transform:scaleX(0.8611);text-decoration:line-through;">abc</span>
<span class="t" style="left:473.5px;top:134.4px;font-size:21px;line-height:21px;color:#444;font-weight:700;transform:scaleX(0.9993);">x</span>
<span class="t" style="left:487.0px;top:148.3px;font-size:10px;line-height:10px;color:#4175b6;letter-spacing:-0.501px;">2</span>
<span class="t" style="left:503.5px;top:134.4px;font-size:21px;line-height:21px;color:#444;font-weight:700;transform:scaleX(0.9993);">x</span>
<span class="t" style="left:517.0px;top:134.3px;font-size:10px;line-height:10px;color:#4175b6;letter-spacing:-0.501px;">2</span>
<span class="t" style="left:541.5px;top:132.7px;font-size:24.5px;line-height:24.5px;color:#fff;font-weight:700;transform:scaleX(0.9717);-webkit-text-stroke:1.3px #4a80c4;text-shadow:0 0 2px #9dbfe6;">A</span>
<span class="t" style="left:582.3px;top:132.7px;font-size:13px;line-height:13px;color:#444;letter-spacing:-1.039px;">ab</span>
<span class="t" style="left:630.0px;top:133.0px;font-size:22.8px;line-height:22.8px;color:#5a5a5a;transform:scaleX(0.9742);-webkit-text-stroke:0.4px #5a5a5a;">A</span>
<span class="t" style="left:726.6px;top:88.2px;font-size:9px;line-height:9px;color:#4175b6;">1</span>
<span class="t" style="left:726.6px;top:96.2px;font-size:9px;line-height:9px;color:#4175b6;">2</span>
<span class="t" style="left:726.6px;top:104.2px;font-size:9px;line-height:9px;color:#4175b6;">3</span>
<span class="t" style="left:769.7px;top:88.2px;font-size:9px;line-height:9px;color:#4175b6;">1</span>
<span class="t" style="left:775.0px;top:96.2px;font-size:9px;line-height:9px;color:#4175b6;">a</span>
<span class="t" style="left:781.7px;top:104.2px;font-size:9px;line-height:9px;color:#4175b6;">i</span>
<span class="t" style="left:895.6px;top:88.0px;font-size:14.8px;line-height:14.8px;color:#4175b6;font-weight:700;transform:scaleX(0.9090);-webkit-text-stroke:0.3px #4175b6;">A</span>
<span class="t" style="left:896.2px;top:99.4px;font-size:14.5px;line-height:14.5px;color:#8e44ad;font-weight:700;transform:scaleX(0.9331);-webkit-text-stroke:0.3px #8e44ad;">Z</span>
<span class="t" style="left:935.0px;top:86.2px;font-size:24px;line-height:24px;color:#4a4a4a;transform:scaleX(1.3333);">¶</span>
<span class="t" style="left:978.0px;top:100.7px;font-size:15.4px;line-height:15.4px;color:#c98a50;letter-spacing:-0.323px;">AaBbCcDdEe</span>
<span class="t" style="left:981.0px;top:137.4px;font-size:17px;line-height:17px;color:#666;letter-spacing:0.155px;"><span style="font-size:14px;position:relative;top:-2px">¶</span> Contact...</span>
<span class="t" style="left:1087.5px;top:94.2px;font-size:28.8px;line-height:28.8px;color:#fff;transform:scaleX(0.8927);width:100.3px;overflow:hidden;">AABBCC</span>
<span class="t" style="left:1102.0px;top:137.4px;font-size:17px;line-height:17px;color:#666;letter-spacing:0.569px;"><span style="font-size:14px;position:relative;top:-2px">¶</span> Name</span>
<span class="t" style="left:1194.5px;top:99.7px;font-size:17.5px;line-height:17.5px;color:#000;letter-spacing:0.737px;">AaBbCcDc</span>
<span class="t" style="left:1302.5px;top:99.7px;font-size:17.5px;line-height:17.5px;color:#000;letter-spacing:0.665px;">AaBbCcDc</span>
<span class="t" style="left:1410.5px;top:99.7px;font-size:17.5px;line-height:17.5px;color:#000;letter-spacing:0.665px;">AaBbCcDc</span>
<span class="t" style="left:1204.5px;top:137.4px;font-size:17px;line-height:17px;color:#666;letter-spacing:0.676px;"><span style="font-size:14px;position:relative;top:-2px">¶</span> Normal</span>
<span class="t" style="left:1307.0px;top:137.4px;font-size:17px;line-height:17px;color:#666;letter-spacing:0.682px;"><span style="font-size:14px;position:relative;top:-2px">¶</span> Normal0</span>
<span class="t" style="left:1413.0px;top:137.4px;font-size:17px;line-height:17px;color:#666;letter-spacing:0.207px;">Corps de...</span>
<span class="t" style="left:1519.0px;top:95.6px;font-size:25px;line-height:25px;color:#4a74b4;letter-spacing:1.048px;width:90px;overflow:hidden;">AaBbCcD</span>
<span class="t" style="left:1519.5px;top:137.4px;font-size:17px;line-height:17px;color:#666;letter-spacing:0.208px;"><span style="font-size:14px;position:relative;top:-2px">¶</span> heading...</span>
<span class="t" style="left:1683.0px;top:81.4px;font-size:17px;line-height:17px;color:#444;letter-spacing:-0.357px;">Rechercher</span>
<span class="t" style="left:1683.0px;top:112.2px;font-size:17px;line-height:17px;color:#444;letter-spacing:-0.068px;">Remplacer</span>
<span class="t" style="left:1684.0px;top:143.2px;font-size:17px;line-height:17px;color:#444;letter-spacing:0.059px;">Sélectionner</span>
<span class="t" style="left:1657.5px;top:108.4px;font-size:13.5px;line-height:13.5px;color:#444;letter-spacing:0.977px;">a<span style="color:#aaa">b</span></span>
<span class="t" style="left:1665.5px;top:118.9px;font-size:13.5px;line-height:13.5px;color:#444;letter-spacing:-0.516px;">a<span style="color:#4175b6">c</span></span>
<span class="t" style="left:1820.5px;top:130.7px;font-size:17px;line-height:17px;color:#444;letter-spacing:-0.589px;">Créer</span>
<span class="t" style="left:1811.5px;top:154.4px;font-size:17px;line-height:17px;color:#444;letter-spacing:-0.051px;">un PDF</span>
<span class="t" style="left:131.3px;top:210.7px;font-size:14.2px;line-height:14.2px;color:#555;">1</span>
<span class="t" style="left:419.3px;top:210.7px;font-size:14.2px;line-height:14.2px;color:#555;">1</span>
<span class="t" style="left:563.3px;top:210.7px;font-size:14.2px;line-height:14.2px;color:#555;">2</span>
<span class="t" style="left:995.2px;top:210.7px;font-size:14.2px;line-height:14.2px;color:#555;">5</span>
<span class="t" style="left:1139.3px;top:210.7px;font-size:14.2px;line-height:14.2px;color:#555;">6</span>
<span class="t" style="left:1283.3px;top:210.7px;font-size:14.2px;line-height:14.2px;color:#555;">7</span>
<span class="t doc" style="left:274.0px;top:384.0px;font-size:19.8px;line-height:19.8px;color:#000;word-spacing:0.503px;"><span style="letter-spacing:-0.95px">En</span> <span style="letter-spacing:0.11px">marge</span> <span style="letter-spacing:0.25px">de</span> <span style="letter-spacing:-0.33px">ce</span> <span style="letter-spacing:-0.21px">processus,</span> <span style="letter-spacing:0.66px">il</span> <span style="letter-spacing:0.36px">convient</span> <span style="letter-spacing:0.25px">de</span> <span style="letter-spacing:0.14px">préciser</span> <span style="letter-spacing:0.35px">que</span> <span style="letter-spacing:-0.27px">des</span> <span style="letter-spacing:0.47px">instruments</span> <span style="letter-spacing:0.94px">ont</span> <span style="letter-spacing:0.25px">également</span> <span style="letter-spacing:0.47px">été</span> <span style="letter-spacing:0.28px">définis</span> <span style="letter-spacing:0.40px">par</span></span>
<span class="t doc" style="left:274.0px;top:415.0px;font-size:19.8px;line-height:19.8px;color:#000;word-spacing:0.082px;"><span style="letter-spacing:0.30px">le</span> <span style="letter-spacing:-1.67px">CORAF</span> <span style="letter-spacing:0.70px">pour</span> <span style="letter-spacing:0.61px">être</span> <span style="letter-spacing:0.20px">utilisés</span> <span style="letter-spacing:0.25px">en</span> <span style="letter-spacing:0.61px">fonction</span> <span style="letter-spacing:0.25px">de</span> <span style="letter-spacing:0.09px">la</span> <span style="letter-spacing:0.51px">nature</span> <span style="letter-spacing:0.55px">du</span> <span style="letter-spacing:0.69px">projet/programme</span> <span style="letter-spacing:-0.47px">à</span> <span style="letter-spacing:0.77px">mettre</span> <span style="letter-spacing:0.25px">en</span> <span style="letter-spacing:0.27px">œuvre</span> <span style="letter-spacing:-0.16px">dans</span> <span style="letter-spacing:0.30px">le</span></span>
<span class="t doc" style="left:274.0px;top:446.0px;font-size:19.8px;line-height:19.8px;color:#000;word-spacing:-1.120px;"><span style="letter-spacing:-1.33px">PO</span> <span style="letter-spacing:0.14px">2018-2022<span class="r">.</span></span> <span style="letter-spacing:0.35px"><span class="r">I</span>l</span> <span style="letter-spacing:-0.06px">s’agit</span> <span style="letter-spacing:0.40px">par</span> <span style="letter-spacing:0.12px">exemple</span> <span style="letter-spacing:-0.27px">des</span> <span style="letter-spacing:0.22px">dispositifs</span> <span style="letter-spacing:0.12px">sur</span> <span style="letter-spacing:0.30px">le</span> <span style="letter-spacing:0.37px">harcèlement</span> <span style="letter-spacing:-0.18px">sexuel</span> <span style="letter-spacing:0.18px">intégrés</span> <span style="letter-spacing:0.56px">directement</span> <span style="letter-spacing:-0.16px">dans</span></span>
<span class="t doc" style="left:274.0px;top:477.0px;font-size:19.8px;line-height:19.8px;color:#000;word-spacing:-0.010px;"><span style="letter-spacing:-0.23px">les</span> <span style="letter-spacing:0.38px">différentes</span> <span style="letter-spacing:0.37px">initiatives.</span> <span style="letter-spacing:0.20px">Un</span> <span style="letter-spacing:0.36px">acteur</span> <span style="letter-spacing:0.55px">du</span> <span style="letter-spacing:-1.67px">CORAF</span> précise <span style="letter-spacing:-0.11px">cela</span> <span style="letter-spacing:0.39px">comme</span> <span style="letter-spacing:0.45px">suit</span> <span style="letter-spacing:0.39px">:</span> <span style="letter-spacing:0.27px">«</span> <span style="letter-spacing:0.35px">Il</span> <span style="letter-spacing:0.08px">y</span> <span style="letter-spacing:-0.47px">a</span> <span style="letter-spacing:-0.23px">les</span> <span style="letter-spacing:0.47px">instruments</span> <span style="letter-spacing:-0.51px">basés</span></span>
<span class="t doc" style="left:274.0px;top:507.7px;font-size:19.8px;line-height:19.8px;color:#000;word-spacing:0.189px;"><span style="letter-spacing:0.12px">sur</span> <span style="letter-spacing:0.30px">le</span> <span style="letter-spacing:0.07px">genre,</span> <span style="letter-spacing:-0.23px">les</span> <span style="letter-spacing:0.23px">harcèlements</span> <span style="letter-spacing:-0.30px">sexuels,</span> <span style="letter-spacing:0.18px">etc.,</span> <span style="letter-spacing:0.85px">et</span> <span style="letter-spacing:0.09px">selon</span> <span style="letter-spacing:0.30px">le</span> <span style="letter-spacing:0.64px">projet<span class="r">,</span></span> <span style="letter-spacing:0.58px">on</span> <span style="letter-spacing:0.73px">peut</span> <span style="letter-spacing:-0.07px">vous</span> <span style="letter-spacing:0.48px">dire</span> <span style="letter-spacing:0.25px">de</span> <span style="letter-spacing:0.21px">déclencher</span> <span style="letter-spacing:0.74px">tel</span> <span style="letter-spacing:0.58px">ou</span></span>
<span class="t doc" style="left:274.0px;top:538.3px;font-size:19.8px;line-height:19.8px;color:#000;word-spacing:-0.526px;"><span style="letter-spacing:0.74px">tel</span> <span style="letter-spacing:0.59px">instrument.</span> <span style="letter-spacing:0.27px">»</span></span>
<span class="t" style="left:1141.8px;top:330.8px;font-size:22.3px;line-height:22.3px;color:#8c8c8c;font-weight:700;transform:scaleX(0.8340);-webkit-text-stroke:0.6px #8c8c8c;">CORAF</span>
<span class="t" style="left:1339.5px;top:393.5px;font-size:17.5px;line-height:17.5px;color:#000;font-weight:700;letter-spacing:0.272px;">Compte Microsoft</span>
<span class="t" style="left:1338.5px;top:417.2px;font-size:17.5px;line-height:17.5px;color:#000;font-weight:700;letter-spacing:0.399px;">Mis en forme :</span>
<span class="t" style="left:1465.5px;top:417.2px;font-size:17.5px;line-height:17.5px;color:#222;letter-spacing:0.071px;">Police :11 pt</span>
<span class="t" style="left:1339.5px;top:459.5px;font-size:17.5px;line-height:17.5px;color:#000;font-weight:700;letter-spacing:0.272px;">Compte Microsoft</span>
<span class="t" style="left:1339.5px;top:483.2px;font-size:17.5px;line-height:17.5px;color:#000;font-weight:700;letter-spacing:0.098px;">Supprimé:</span>
<span class="t" style="left:1430.5px;top:483.6px;font-size:17px;line-height:17px;color:#222;">,</span>
<span class="t" style="left:1339.5px;top:525.5px;font-size:17.5px;line-height:17.5px;color:#000;font-weight:700;letter-spacing:0.272px;">Compte Microsoft</span>
<span class="t" style="left:1338.5px;top:549.2px;font-size:17.5px;line-height:17.5px;color:#000;font-weight:700;letter-spacing:0.399px;">Mis en forme :</span>
<span class="t" style="left:1465.5px;top:549.2px;font-size:17.5px;line-height:17.5px;color:#222;letter-spacing:0.071px;">Police :11 pt</span>
<span class="t" style="left:1339.5px;top:591.5px;font-size:17.5px;line-height:17.5px;color:#000;font-weight:700;letter-spacing:0.272px;">Compte Microsoft</span>
<span class="t" style="left:1339.5px;top:615.2px;font-size:17.5px;line-height:17.5px;color:#000;font-weight:700;letter-spacing:0.098px;">Supprimé:</span>
<span class="t" style="left:1430.5px;top:615.6px;font-size:17px;line-height:17px;color:#222;">i</span>
<span class="t" style="left:1339.5px;top:657.5px;font-size:17.5px;line-height:17.5px;color:#000;font-weight:700;letter-spacing:0.272px;">Compte Microsoft</span>
<span class="t" style="left:1338.5px;top:681.2px;font-size:17.5px;line-height:17.5px;color:#000;font-weight:700;letter-spacing:0.399px;">Mis en forme :</span>
<span class="t" style="left:1465.5px;top:681.2px;font-size:17.5px;line-height:17.5px;color:#222;letter-spacing:0.071px;">Police :11 pt</span>
<span class="t" style="left:1339.5px;top:723.0px;font-size:17.5px;line-height:17.5px;color:#000;font-weight:700;letter-spacing:0.272px;">Compte Microsoft</span>
<span class="t" style="left:1338.5px;top:746.7px;font-size:17.5px;line-height:17.5px;color:#000;font-weight:700;letter-spacing:0.399px;">Mis en forme :</span>
<span class="t" style="left:1465.5px;top:746.7px;font-size:17.5px;line-height:17.5px;color:#222;letter-spacing:0.071px;">Police :11 pt</span>
<span class="t" style="left:7.5px;top:996.4px;font-size:15.5px;line-height:15.5px;color:#fff;letter-spacing:-0.380px;">PAGE 13 SUR 26</span>
<span class="t" style="left:228.5px;top:996.4px;font-size:15.5px;line-height:15.5px;color:#fff;letter-spacing:-0.465px;">FRANÇAIS (CANADA)</span>
<span class="t" style="left:1872.0px;top:996.4px;font-size:15.5px;line-height:15.5px;color:#fff;letter-spacing:-0.125px;">100%</span>
</div>
</body></html>
